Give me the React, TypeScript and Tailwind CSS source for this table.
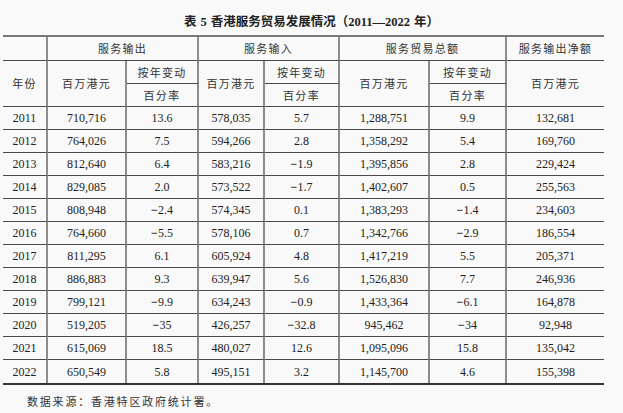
const rows: string[][] = [
  ["2011", "710,716", "13.6", "578,035", "5.7", "1,288,751", "9.9", "132,681"],
  ["2012", "764,026", "7.5", "594,266", "2.8", "1,358,292", "5.4", "169,760"],
  ["2013", "812,640", "6.4", "583,216", "−1.9", "1,395,856", "2.8", "229,424"],
  ["2014", "829,085", "2.0", "573,522", "−1.7", "1,402,607", "0.5", "255,563"],
  ["2015", "808,948", "−2.4", "574,345", "0.1", "1,383,293", "−1.4", "234,603"],
  ["2016", "764,660", "−5.5", "578,106", "0.7", "1,342,766", "−2.9", "186,554"],
  ["2017", "811,295", "6.1", "605,924", "4.8", "1,417,219", "5.5", "205,371"],
  ["2018", "886,883", "9.3", "639,947", "5.6", "1,526,830", "7.7", "246,936"],
  ["2019", "799,121", "−9.9", "634,243", "−0.9", "1,433,364", "−6.1", "164,878"],
  ["2020", "519,205", "−35", "426,257", "−32.8", "945,462", "−34", "92,948"],
  ["2021", "615,069", "18.5", "480,027", "12.6", "1,095,096", "15.8", "135,042"],
  ["2022", "650,549", "5.8", "495,151", "3.2", "1,145,700", "4.6", "155,398"],
];

const colWidths = [45, 79, 72, 66, 75, 90, 77, 97];

const hd =
  "border-b border-b-[#4a4a4a] border-r-2 border-r-[#8c8c8c] text-center align-middle p-0 font-['Noto_Sans_CJK_SC',sans-serif] text-[11px] tracking-[1.3px] text-[#333]";
const hdLast =
  "border-b border-b-[#4a4a4a] text-center align-middle p-0 font-['Noto_Sans_CJK_SC',sans-serif] text-[11px] tracking-[1.3px] text-[#333]";

// minus signs in the source are set a little heavier than the digits
function Num({ v }: { v: string }) {
  if (v.startsWith("−")) {
    return (
      <>
        <span className="font-bold">−</span>
        {v.slice(1)}
      </>
    );
  }
  return <>{v}</>;
}

export default function App() {
  return (
    <div className="w-[623px] h-[413px] bg-[#f9f9f9] overflow-hidden">
      <h1 className="pt-[13px] h-[35px] text-center text-[12.5px] font-bold text-[#222] leading-[18px] font-['Liberation_Serif','Noto_Sans_CJK_SC',serif]">
        表<span className="ml-[4px] mr-[4px]">5</span>香港服务贸易发展情况（2011—2022<span className="ml-[4px]">年</span>）
      </h1>
      <table className="ml-[3px] w-[601px] table-fixed border-separate border-spacing-0 border-t-2 border-t-[#777] border-b-2 border-b-[#333]">
        <colgroup>
          {colWidths.map((w, i) => (
            <col key={i} style={{ width: w }} />
          ))}
        </colgroup>
        <thead>
          <tr className="h-[24px]">
            <th className={hd}></th>
            <th colSpan={2} className={`${hd} font-normal`}>服务输出</th>
            <th colSpan={2} className={`${hd} font-normal`}>服务输入</th>
            <th colSpan={2} className={`${hd} font-normal`}>服务贸易总额</th>
            <th className={`${hdLast} font-normal`}>服务输出净额</th>
          </tr>
          <tr className="h-[23px]">
            <th rowSpan={2} className={`${hd} font-normal`}>年份</th>
            <th rowSpan={2} className={`${hd} font-normal`}>百万港元</th>
            <th className={`${hd} font-normal`}>按年变动</th>
            <th rowSpan={2} className={`${hd} font-normal`}>百万港元</th>
            <th className={`${hd} font-normal`}>按年变动</th>
            <th rowSpan={2} className={`${hd} font-normal`}>百万港元</th>
            <th className={`${hd} font-normal`}>按年变动</th>
            <th rowSpan={2} className={`${hdLast} font-normal`}>百万港元</th>
          </tr>
          <tr className="h-[23px]">
            <th className={`${hd} font-normal`}>百分率</th>
            <th className={`${hd} font-normal`}>百分率</th>
            <th className={`${hd} font-normal`}>百分率</th>
          </tr>
        </thead>
        <tbody className="font-['Liberation_Serif',serif] text-[12px] text-[#222]">
          {rows.map((r, ri) => (
            <tr key={r[0]} className="h-[23px]">
              {r.map((v, ci) => (
                <td
                  key={ci}
                  className={`p-0 text-center align-middle ${
                    ri < rows.length - 1 ? "border-b border-b-[#4a4a4a]" : ""
                  } ${ci < r.length - 1 ? "border-r-2 border-r-[#8c8c8c]" : ""}`}
                >
                  <Num v={v} />
                </td>
              ))}
            </tr>
          ))}
        </tbody>
      </table>
      <p className="mt-[8px] pl-[27px] text-[11px] tracking-[1.8px] text-[#333] font-['Noto_Sans_CJK_SC',sans-serif]">
        数据来源：香港特区政府统计署。
      </p>
    </div>
  );
}
